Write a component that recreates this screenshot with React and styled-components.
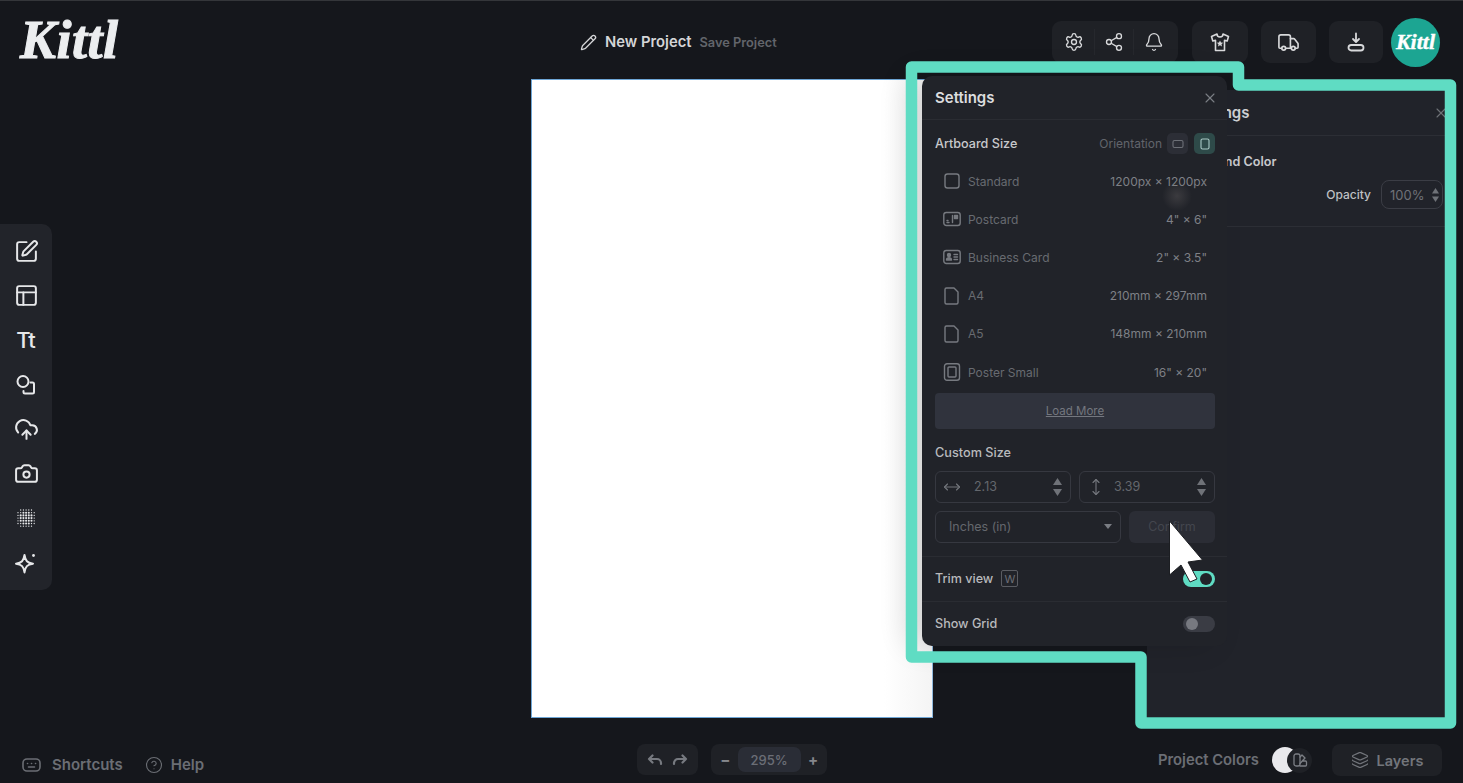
import React from "react";
import styled, { createGlobalStyle } from "styled-components";
import {
  Settings as SettingsIcon,
  Share2,
  Bell,
  Truck,
  Pencil,
  X,
  SquarePen,
  PanelsTopLeft,
  CloudUpload,
  Camera,
  CircleHelp,
  Layers,
  MoveHorizontal,
  MoveVertical,
} from "lucide-react";

const GlobalStyle = createGlobalStyle`
  html, body { margin: 0; padding: 0; background: #15171c; }
  body { font-family: Inter, "Liberation Sans", sans-serif; }
  * { box-sizing: border-box; }
`;

const Page = styled.div`
  position: relative;
  width: 1463px;
  height: 783px;
  overflow: hidden;
  background: #15171c;
  border-top: 1px solid #34363a;
  display: flex;
  flex-direction: column;
`;

/* top bar */
const Header = styled.header`
  height: 77px;
  flex: none;
  display: flex;
  align-items: center;
  padding: 5px 23px 0 20px;
`;

const Logo = styled.span`
  font-family: "Liberation Serif", serif;
  font-weight: 700;
  font-style: italic;
  font-size: ${(p) => p.$size}px;
  line-height: 1;
  letter-spacing: ${(p) => p.$spacing}px;
  color: ${(p) => p.$color || "#eceef0"};
  -webkit-text-stroke: ${(p) => p.$stroke}px currentColor;
`;

const LogoBox = styled.div`
  width: 98px;
  flex: none;
  margin-top: -4px;
`;

const ProjectTitle = styled.div`
  margin-left: 462px;
  display: flex;
  align-items: center;
  svg { margin-right: 8px; color: #d5d6d8; }
`;

const ProjectName = styled.span`
  font-size: 14.8px;
  font-weight: 600;
  color: #d4d5d7;
`;

const SaveLink = styled.span`
  margin-left: 8px;
  font-size: 12.8px;
  font-weight: 600;
  color: #62656b;
`;

const HeaderRight = styled.div`
  margin-left: auto;
  display: flex;
  align-items: center;
`;

const ToolGroup = styled.div`
  height: 42px;
  width: ${(p) => p.$w}px;
  margin-right: ${(p) => p.$mr}px;
  background: #1f2126;
  border-radius: 9px;
  display: flex;
  align-items: center;
  justify-content: center;
  padding: ${(p) => (p.$split ? "0 5px 0 2px" : "0")};
  color: #d8d9db;
`;

const ToolCell = styled.span`
  width: 40px;
  height: 26px;
  display: flex;
  align-items: center;
  justify-content: center;
  border-left: ${(p) => (p.$first ? "0" : "1px solid #26282d")};
`;

const Avatar = styled.div`
  width: 49px;
  height: 49px;
  border-radius: 50%;
  background: #1ca592;
  display: flex;
  align-items: center;
  justify-content: center;
`;

/* middle */
const Workspace = styled.div`
  flex: 1;
  display: flex;
  align-items: center;
`;

const ToolRail = styled.nav`
  width: 52px;
  height: 366px;
  margin-top: -2px;
  flex: none;
  background: #22242a;
  border-radius: 0 10px 10px 0;
  display: grid;
  grid-auto-rows: 44.5px;
  align-content: center;
  justify-items: center;
  align-items: center;
  color: #e6e7e9;
`;

const RailText = styled.span`
  font-family: Inter, sans-serif;
  font-size: 22px;
  font-weight: 500;
  line-height: 24px;
`;

const Artboard = styled.div`
  margin-left: 479px;
  align-self: flex-start;
  margin-top: 1px;
  width: 402px;
  height: 639px;
  background: linear-gradient(90deg, #fff 88%, #f4f4f4 100%);
  border: 1px solid #6ea6d6;
  border-right-color: #8fb8dc;
`;

/* bottom bar */
const Footer = styled.footer`
  height: 45px;
  flex: none;
  display: flex;
  align-items: flex-start;
  padding: 6px 21px 0 22px;
`;

const FootLink = styled.span`
  display: flex;
  align-items: center;
  height: 31px;
  margin-right: ${(p) => p.$mr}px;
  margin-top: 5px;
  font-size: 15px;
  font-weight: 600;
  color: #6b6e74;
  svg { margin-right: ${(p) => p.$gap}px; }
`;

const HistoryGroup = styled.div`
  width: 61px;
  height: 31px;
  margin-left: 433px;
  border-radius: 8px;
  background: #1f2126;
  display: flex;
  align-items: center;
  justify-content: space-evenly;
  color: #777a80;
`;

const ZoomGroup = styled.div`
  width: 116px;
  height: 31px;
  margin-left: 13px;
  border-radius: 8px;
  background: #1f2126;
  display: flex;
  align-items: center;
  justify-content: space-between;
  padding: 0 9px;
  color: #85878c;
  font-size: 15px;
  font-weight: 700;
`;

const ZoomValue = styled.span`
  width: 63px;
  height: 25px;
  border-radius: 7px;
  background: #2a2d36;
  color: #6b6e76;
  font-size: 13px;
  font-weight: 500;
  display: flex;
  align-items: center;
  justify-content: center;
`;

const FootRight = styled.div`
  margin-left: auto;
  display: flex;
  align-items: center;
`;

const ColorsLabel = styled.span`
  margin-right: 13px;
  font-size: 14.8px;
  font-weight: 600;
  color: #6b6e74;
`;

const Moon = styled.span`
  width: 26px;
  height: 26px;
  border-radius: 50%;
  background: #e9e9ec;
`;

const SwatchBadge = styled.span`
  width: 25px;
  height: 25px;
  margin-left: -11px;
  border-radius: 50%;
  background: #1f2126;
  color: #7c7f85;
  display: flex;
  align-items: center;
  justify-content: center;
`;

const LayersButton = styled.button`
  width: 110px;
  height: 32px;
  margin-left: 20px;
  border: 0;
  border-radius: 8px;
  background: #1f2126;
  color: #72757b;
  font: 600 14.5px Inter, sans-serif;
  display: flex;
  align-items: center;
  justify-content: center;
  gap: 8px;
`;

/* panels */
const BackPanel = styled.aside`
  position: absolute;
  left: 1147px;
  top: 89px;
  width: 304px;
  height: 627px;
  background: #21232a;
  z-index: 1;
`;

const BackHeader = styled.div`
  height: 46px;
  padding: 0 2px 0 43px;
  border-bottom: 1px solid #2c2e35;
  display: flex;
  align-items: center;
  justify-content: space-between;
  font-size: 15px;
  font-weight: 600;
  color: #cfd0d3;
  svg { color: #6f7278; }
`;

const BackSection = styled.div`
  height: 91px;
  padding: 17px 8px 0 20px;
  border-bottom: 1px solid #2c2e35;
`;

const BackLabel = styled.div`
  font-size: 12.6px;
  font-weight: 600;
  line-height: 18px;
  color: #c8c9cc;
`;

const OpacityRow = styled.div`
  margin-top: 9px;
  display: flex;
  align-items: center;
  justify-content: flex-end;
  gap: 10px;
  font-size: 12px;
  font-weight: 500;
  color: #bfc0c3;
`;

const OpacityInput = styled.div`
  width: 62px;
  height: 29px;
  border: 1px solid #3b3d45;
  border-radius: 8px;
  padding: 0 3px 0 8px;
  display: flex;
  align-items: center;
  justify-content: space-between;
  font-size: 13px;
  font-weight: 400;
  color: #6f7278;
`;

const SettingsPanel = styled.aside`
  position: absolute;
  left: 922px;
  top: 75px;
  width: 305px;
  height: 570px;
  background: #212329;
  border-radius: 10px;
  box-shadow: -14px 0 30px rgba(0, 0, 0, 0.14);
  z-index: 2;
`;

const PanelHeader = styled.div`
  height: 44px;
  padding: 0 9px 0 13px;
  border-bottom: 1px solid #2a2c32;
  display: flex;
  align-items: center;
  justify-content: space-between;
  font-size: 15px;
  font-weight: 600;
  color: #dcdddf;
  svg { color: #7c7f85; }
`;

const PanelBody = styled.div`
  padding: 13px 12px 0 13px;
`;

const SectionRow = styled.div`
  height: 21px;
  display: flex;
  align-items: center;
  font-size: 12.6px;
  font-weight: 500;
  color: #c8c9cc;
`;

const OrientLabel = styled.span`
  margin-left: auto;
  margin-right: 5px;
  font-size: 12px;
  font-weight: 400;
  color: #62656c;
`;

const OrientButton = styled.span`
  width: 21px;
  height: 21px;
  margin-left: ${(p) => (p.$active ? 6 : 0)}px;
  border-radius: 5px;
  background: ${(p) => (p.$active ? "#2e4a49" : "#2c2e36")};
  color: ${(p) => (p.$active ? "#a9c9c5" : "#6d7077")};
  display: flex;
  align-items: center;
  justify-content: center;
`;

const SizeList = styled.div`
  margin-top: 8px;
`;

const SizeRow = styled.div`
  height: 38.2px;
  padding: 0 8px;
  display: flex;
  align-items: center;
  font-size: 12px;
  color: #686b71;
  svg { flex: none; margin-right: 7px; color: #777a80; }
`;

const SizeValue = styled.span`
  margin-left: auto;
  color: #7e8086;
  font-size: 12px;
`;

const LoadMore = styled.div`
  margin-top: 2px;
  height: 36px;
  border-radius: 4px;
  background: #30333d;
  display: flex;
  align-items: center;
  justify-content: center;
  font-size: 11.5px;
  text-decoration: underline;
  color: #74777f;
`;

const CustomLabel = styled.div`
  margin-top: 14.5px;
  height: 18px;
  line-height: 18px;
  font-size: 12.7px;
  font-weight: 500;
  color: #b9babd;
`;

const FieldRow = styled.div`
  margin-top: ${(p) => p.$mt}px;
  display: flex;
  gap: 8px;
`;

const Field = styled.div`
  flex: 1;
  height: 32px;
  border: 1px solid #363840;
  border-radius: 6px;
  padding: 0 8px 0 ${(p) => p.$pl || 7}px;
  display: flex;
  align-items: center;
  font-size: 12.5px;
  color: #64676d;
  svg { flex: none; color: #74777d; }
`;

const FieldValue = styled.span`
  margin-left: ${(p) => p.$ml}px;
  margin-right: auto;
`;

const ConfirmButton = styled.div`
  width: 86px;
  height: 32px;
  flex: none;
  border-radius: 6px;
  background: #2b2d35;
  display: flex;
  align-items: center;
  justify-content: center;
  font-size: 12.5px;
  color: #43464e;
`;

const OptionRow = styled.div`
  height: 45px;
  margin-top: ${(p) => p.$mt || 0}px;
  padding: 0 12px 0 13px;
  border-top: 1px solid #2a2c32;
  display: flex;
  align-items: center;
  font-size: 12.6px;
  font-weight: 500;
  color: #b9babd;
`;

const KeyHint = styled.span`
  width: 17px;
  height: 17px;
  margin-left: 8px;
  border: 1px solid #5a5c62;
  border-radius: 2px;
  font-size: 11px;
  font-weight: 400;
  color: #6e7076;
  display: flex;
  align-items: center;
  justify-content: center;
`;

const Toggle = styled.span`
  width: 32px;
  height: 16px;
  margin-left: auto;
  padding: 2px 3px;
  border-radius: 8px;
  background: ${(p) => (p.$on ? "#5fdcc3" : "#3a3c44")};
  display: flex;
  justify-content: ${(p) => (p.$on ? "flex-end" : "flex-start")};
  &::after {
    content: "";
    width: 12px;
    height: 12px;
    border-radius: 50%;
    background: ${(p) => (p.$on ? "#212329" : "#777980")};
  }
`;

const GhostDot = styled.span`
  position: absolute;
  left: 240px;
  top: 105px;
  width: 30px;
  height: 30px;
  border-radius: 50%;
  background: radial-gradient(circle, rgba(120, 114, 114, 0.3), rgba(120, 114, 114, 0) 70%);
`;

const Overlay = styled.svg`
  position: absolute;
  left: 0;
  top: 0;
  width: 1463px;
  height: 783px;
  pointer-events: none;
  z-index: 3;
`;

/* small drawn icons */
const Svg = ({ size = 18, w, h, sw = 1.6, children }) => (
  <svg
    width={w || size}
    height={h || size}
    viewBox={`0 0 ${w || size} ${h || size}`}
    fill="none"
    stroke="currentColor"
    strokeWidth={sw}
    strokeLinecap="round"
    strokeLinejoin="round"
  >
    {children}
  </svg>
);

const ShirtStar = () => (
  <Svg size={20}>
    <path d="M7 2 1.500 4.500l1.300 4.500 2.700-.6V18.500h9V8.400l2.700.6 1.300-4.500L13 2a3 3 0 0 1-6 0Z" />
    <path d="m10 8.500 1 2.100 2.200.2-1.700 1.500.5 2.200L10 13.300l-2 1.200.5-2.200-1.700-1.500 2.200-.2Z" fill="currentColor" stroke="none" />
  </Svg>
);

const TrayDownload = () => (
  <Svg size={20} sw={1.800}>
    <path d="M10 1.500v8M7 7l3 3 3-3" />
    <rect x="2.500" y="13" width="15" height="5.500" rx="2.700" />
  </Svg>
);

const ShapesIcon = () => (
  <Svg size={22} sw={2}>
    <circle cx="8" cy="7.500" r="5.500" />
    <path d="M15.500 8.500h2a1.500 1.500 0 0 1 1.500 1.500v8a1.500 1.500 0 0 1-1.500 1.500H10a1.500 1.500 0 0 1-1.500-1.500v-1" />
  </Svg>
);

const HalftoneIcon = () => {
  const dots = [];
  for (let y = 0; y < 7; y++) {
    for (let x = 0; x < 7; x++) {
      const d = Math.hypot(x - 3, y - 3);
      if (d < 3.9) {
        dots.push(
          <circle
            key={`${x}-${y}`}
            cx={3 + x * 2.700}
            cy={3 + y * 2.700}
            r={d < 2.500 ? 1.050 : 0.650}
            fill="currentColor"
            stroke="none"
          />
        );
      }
    }
  }
  return <Svg size={22}>{dots}</Svg>;
};

const SparkIcon = () => (
  <Svg size={24} sw={2}>
    <path d="M10.500 4c.9 6 2.700 7.800 8.500 8.700-5.800.9-7.600 2.700-8.500 8.700-.9-6-2.700-7.800-8.500-8.700 5.800-.9 7.600-2.700 8.500-8.700Z" />
    <circle cx="19.500" cy="4.500" r="1.400" fill="currentColor" stroke="none" />
  </Svg>
);

const KeyboardIcon = () => (
  <Svg w={19} h={16} sw={1.600}>
    <rect x="1" y="2" width="17" height="12" rx="4" />
    <path d="M5.500 6.500h.1M9.500 6.500h.1M13.500 6.500h.1M6.500 10h6" />
  </Svg>
);

const HookArrow = ({ flip }) => (
  <Svg w={16} h={14} sw={2.200}>
    {flip ? <path d="M10.500 2.500 14 6l-3.500 3.500M14 6H6a4 4 0 0 0-4 4v1" /> : <path d="M5.500 2.500 2 6l3.500 3.500M2 6h8a4 4 0 0 1 4 4v1" />}
  </Svg>
);

const SwatchIcon = () => (
  <Svg size={16} sw={1.300}>
    <rect x="2" y="2" width="6" height="12" rx="2" />
    <path d="M8 5l2-2 3 3-5 5.500M8 14h5.500a1 1 0 0 0 1-1v-3a1 1 0 0 0-1-1H11" />
  </Svg>
);

const Spinner = ({ small }) => (
  <svg width={small ? 7 : 9} height={small ? 14 : 18} viewBox="0 0 9 18" fill="#6f7278">
    <path d="M4.500 0 9 7H0Z" />
    <path d="M4.500 18 9 11H0Z" />
  </svg>
);

const FrameIcon = ({ children }) => <Svg size={18} sw={1.400}>{children}</Svg>;

const sizes = [
  { name: "Standard", value: "1200px × 1200px", icon: <rect x="2" y="2" width="14" height="14" rx="2.500" /> },
  {
    name: "Postcard",
    value: "4\" × 6\"",
    icon: (
      <>
        <rect x="0.800" y="2.500" width="16.400" height="13" rx="2.500" />
        <path d="M9.500 5.500v7M4 12.500h2M4 10.500h1" />
        <rect x="11.500" y="5.500" width="3" height="3" fill="currentColor" />
      </>
    ),
  },
  {
    name: "Business Card",
    value: "2\" × 3.5\"",
    icon: (
      <>
        <rect x="0.800" y="2.500" width="16.400" height="13" rx="2.500" />
        <circle cx="6" cy="7" r="1.500" fill="currentColor" />
        <path d="M3.500 12c.3-3 4.700-3 5 0ZM11 6.500h3.500M11 9h3.500M11 11.500h3.500" fill="currentColor" />
      </>
    ),
  },
  { name: "A4", value: "210mm × 297mm", icon: <path d="M3.500 1h7.500l4 4v10.500a1.500 1.500 0 0 1-1.500 1.500h-10A1.500 1.500 0 0 1 2 15.500v-13A1.500 1.500 0 0 1 3.500 1Z" /> },
  { name: "A5", value: "148mm × 210mm", icon: <path d="M3.500 1h7.500l4 4v10.500a1.500 1.500 0 0 1-1.500 1.500h-10A1.500 1.500 0 0 1 2 15.500v-13A1.500 1.500 0 0 1 3.500 1Z" /> },
  {
    name: "Poster Small",
    value: "16\" × 20\"",
    icon: (
      <>
        <rect x="1.500" y="0.800" width="15" height="16.400" rx="2.500" />
        <rect x="5" y="4" width="8" height="10" rx="1" />
      </>
    ),
  },
];

export default function App() {
  return (
    <Page>
      <GlobalStyle />
      <Header>
        <LogoBox><Logo $size={54} $spacing={0.5} $stroke={1}>Kittl</Logo></LogoBox>
        <ProjectTitle>
          <Pencil size={17} strokeWidth={1.800} />
          <ProjectName>New Project</ProjectName>
          <SaveLink>Save Project</SaveLink>
        </ProjectTitle>
        <HeaderRight>
          <ToolGroup $w={126} $mr={14} $split>
            <ToolCell $first><SettingsIcon size={20} strokeWidth={1.600} /></ToolCell>
            <ToolCell><Share2 size={20} strokeWidth={1.600} /></ToolCell>
            <ToolCell><Bell size={20} strokeWidth={1.600} /></ToolCell>
          </ToolGroup>
          <ToolGroup $w={56} $mr={13}><ShirtStar /></ToolGroup>
          <ToolGroup $w={55} $mr={13}><Truck size={23} strokeWidth={1.700} /></ToolGroup>
          <ToolGroup $w={54} $mr={8}><TrayDownload /></ToolGroup>
          <Avatar><Logo $size={22} $spacing={0} $stroke={0.400} $color="#fff">Kittl</Logo></Avatar>
        </HeaderRight>
      </Header>

      <Workspace>
        <ToolRail>
          <SquarePen size={25} strokeWidth={1.900} />
          <PanelsTopLeft size={25} strokeWidth={1.900} />
          <RailText>Tt</RailText>
          <ShapesIcon />
          <CloudUpload size={25} strokeWidth={1.900} />
          <Camera size={25} strokeWidth={1.900} />
          <HalftoneIcon />
          <SparkIcon />
        </ToolRail>
        <Artboard />
      </Workspace>

      <Footer>
        <FootLink $mr={22} $gap={11}><KeyboardIcon />Shortcuts</FootLink>
        <FootLink $mr={0} $gap={8}><CircleHelp size={18} strokeWidth={1.500} />Help</FootLink>
        <HistoryGroup><HookArrow /><HookArrow flip /></HistoryGroup>
        <ZoomGroup>
          <span>−</span>
          <ZoomValue>295%</ZoomValue>
          <span>+</span>
        </ZoomGroup>
        <FootRight>
          <ColorsLabel>Project Colors</ColorsLabel>
          <Moon />
          <SwatchBadge><SwatchIcon /></SwatchBadge>
          <LayersButton><Layers size={18} strokeWidth={1.600} />Layers</LayersButton>
        </FootRight>
      </Footer>

      <BackPanel>
        <BackHeader>
          <span>Settings</span>
          <X size={16} strokeWidth={1.600} />
        </BackHeader>
        <BackSection>
          <BackLabel>Background Color</BackLabel>
          <OpacityRow>
            Opacity
            <OpacityInput>100%<Spinner small /></OpacityInput>
          </OpacityRow>
        </BackSection>
      </BackPanel>

      <SettingsPanel>
        <PanelHeader>
          Settings
          <X size={16} strokeWidth={1.600} />
        </PanelHeader>
        <PanelBody>
          <SectionRow>
            Artboard Size
            <OrientLabel>Orientation</OrientLabel>
            <OrientButton>
              <Svg size={12} sw={1.100}><rect x="1" y="2.500" width="10" height="7" rx="1.500" /></Svg>
            </OrientButton>
            <OrientButton $active>
              <Svg size={12} sw={1.100}><rect x="2" y="1" width="8" height="10" rx="1.500" /></Svg>
            </OrientButton>
          </SectionRow>
          <SizeList>
            {sizes.map((s) => (
              <SizeRow key={s.name}>
                <FrameIcon>{s.icon}</FrameIcon>
                {s.name}
                <SizeValue>{s.value}</SizeValue>
              </SizeRow>
            ))}
          </SizeList>
          <LoadMore>Load More</LoadMore>
          <CustomLabel>Custom Size</CustomLabel>
          <FieldRow $mt={9}>
            <Field>
              <MoveHorizontal size={18} strokeWidth={1.500} />
              <FieldValue $ml={13}>2.13</FieldValue>
              <Spinner />
            </Field>
            <Field>
              <MoveVertical size={18} strokeWidth={1.500} />
              <FieldValue $ml={9}>3.39</FieldValue>
              <Spinner />
            </Field>
          </FieldRow>
          <FieldRow $mt={8}>
            <Field $pl={13}>
              <FieldValue $ml={0}>Inches (in)</FieldValue>
              <svg width="8" height="5" viewBox="0 0 8 5" fill="#7a7d83"><path d="M0 0h8L4 5Z" /></svg>
            </Field>
            <ConfirmButton>Confirm</ConfirmButton>
          </FieldRow>
        </PanelBody>
        <OptionRow $mt={13}>
          Trim view
          <KeyHint>W</KeyHint>
          <Toggle $on />
        </OptionRow>
        <OptionRow>
          Show Grid
          <Toggle />
        </OptionRow>
        <GhostDot />
      </SettingsPanel>

      <Overlay viewBox="0 0 1463 783">
        <path
          d="M911.500 66H1238.500V84H1450.500V722H1141V656H911.500Z"
          fill="none"
          stroke="#5fdcc3"
          strokeWidth="11.500"
          strokeLinejoin="round"
        />
        <path
          d="M1169.500 520 1202.500 559 1188 561 1197 578 1190 581 1181 564 1169.500 574Z"
          fill="#fff"
          stroke="#1c1e22"
          strokeWidth="1"
          strokeLinejoin="round"
        />
      </Overlay>
    </Page>
  );
}
